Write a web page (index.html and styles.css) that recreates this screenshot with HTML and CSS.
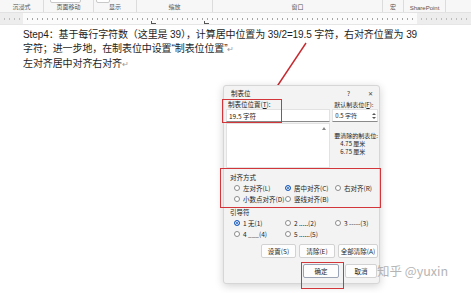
FILE: index.html
```html
<!DOCTYPE html>
<html>
<head>
	<meta charset="utf-8">
	<title>制表位</title>
	<link rel="stylesheet" href="styles.css">
</head>
<body>
	<div class="ribbon">
		<div class="group g1"><span>沉浸式</span></div>
		<div class="group g2"><div class="btn-edge"></div><span>页面移动</span></div>
		<div class="group g3"><div class="btn-edge"></div><span>显示</span></div>
		<div class="group g4"><span>缩放</span></div>
		<div class="group g5"><span>窗口</span></div>
		<div class="group g6"><span>宏</span></div>
		<div class="group g7"><span>SharePoint</span></div>
		<div class="group g8"></div>
	</div>
	<div class="ruler">
		<div class="ruler-margin left"></div>
		<div class="ruler-scale">
			<span class="tab-mark t1"></span>
			<span class="tab-mark t2"></span>
		</div>
		<div class="ruler-margin right"></div>
	</div>
	<div class="page">
		<div class="line">Step4：基于每行字符数（这里是 39），计算居中位置为 39/2=19.5 字符，右对齐位置为 39</div>
		<div class="line">字符；进一步地，在制表位中设置“制表位位置”<span class="para">↵</span></div>
		<div class="line">左对齐居中对齐右对齐<span class="para">↵</span></div>
	</div>

	<svg class="arrow" width="471" height="293" viewBox="0 0 471 293">
		<line x1="306" y1="43" x2="274" y2="91" stroke="#c8272d" stroke-width="1.4"/>
		<polygon points="271,97 270.5,88 277.5,92.5" fill="#c8272d"/>
	</svg>

	<div class="dialog">
		<div class="title-bar">
			<span class="title">制表位</span>
			<span class="help">?</span>
			<span class="close">✕</span>
		</div>
		<div class="top-cols">
			<div class="col-left">
				<div class="label">制表位位置(<u>T</u>):</div>
				<div class="input">19.5 字符</div>
				<div class="list">
					<svg class="scroll-up" width="4" height="3" viewBox="0 0 4 3"><polygon points="0,3 2,0 4,3" fill="#888"/></svg>
				</div>
			</div>
			<div class="col-right">
				<div class="label">默认制表位(<u>F</u>):</div>
				<div class="input small">
					<span>0.5 字符</span>
					<svg class="spin" width="4" height="8" viewBox="0 0 4 8"><polygon points="0,3 2,1 4,3" fill="#555"/><polygon points="0,5 2,7 4,5" fill="#555"/></svg>
				</div>
				<div class="label clear-title">要清除的制表位:</div>
				<div class="clear-item">4.75 厘米</div>
				<div class="clear-item">6.75 厘米</div>
			</div>
		</div>
		<div class="section-title first">对齐方式</div>
		<div class="radios">
			<div class="radio"><i></i>左对齐(L)</div>
			<div class="radio on"><i></i>居中对齐(C)</div>
			<div class="radio"><i></i>右对齐(R)</div>
			<div class="radio"><i></i>小数点对齐(D)</div>
			<div class="radio"><i></i>竖线对齐(B)</div>
		</div>
		<div class="section-title">引导符</div>
		<div class="radios">
			<div class="radio on"><i></i>1 无(1)</div>
			<div class="radio"><i></i>2 .....(2)</div>
			<div class="radio"><i></i>3 -----(3)</div>
			<div class="radio"><i></i>4 ___(4)</div>
			<div class="radio"><i></i>5 ......(5)</div>
		</div>
		<div class="btn-row">
			<button class="b1">设置(S)</button>
			<button class="b2">清除(E)</button>
			<button class="b3">全部清除(A)</button>
		</div>
		<div class="btn-row last">
			<button class="ok">确定</button>
			<button class="cancel">取消</button>
		</div>
	</div>

	<div class="mark mark-pos"></div>
	<div class="mark mark-align"></div>
	<div class="mark mark-ok"></div>

	<div class="watermark">知乎 @yuxin</div>
</body>
</html>
```

FILE: styles.css
```css
* {
	margin: 0;
	padding: 0;
	box-sizing: border-box;
}

body {
	width: 471px;
	height: 293px;
	overflow: hidden;
	background: #fff;
	font-family: "Liberation Sans", "Noto Sans CJK SC", sans-serif;
	color: #222;
	position: relative;
}

/* ribbon */
.ribbon {
	display: flex;
	height: 13px;
	background: #f7f7f7;
	border-bottom: 1px solid #e2e2e2;
}

.group {
	position: relative;
	border-right: 1px solid #dcdcdc;
	display: flex;
	justify-content: center;
	align-items: flex-end;
	font-size: 6px;
	color: #555;
	padding-bottom: 1px;
}

.g1 { width: 44px; }
.g2 { width: 50px; }
.g3 { width: 43px; }
.g4 { width: 76px; }
.g5 { width: 170px; }
.g6 { width: 21px; }
.g7 { width: 42px; }
.g8 { flex: 1; border-right: none; }

.btn-edge {
	position: absolute;
	top: -4px;
	left: 6px;
	right: 12px;
	height: 7px;
	border: 1px solid #c9c9c9;
	border-radius: 2px;
	background: #fff;
}

.g3 .btn-edge {
	left: 2px;
	right: 26px;
}

/* ruler */
.ruler {
	display: flex;
	height: 12px;
	background: #ededed;
	border-bottom: 1px solid #e6e6e6;
}

.ruler-margin.left {
	width: 23px;
	background: repeating-linear-gradient(90deg, transparent 0 4px, #bdbdbd 4px 5px) 0 5px / 100% 2px no-repeat;
}

.ruler-margin.right {
	flex: 1;
	background: repeating-linear-gradient(90deg, transparent 0 4px, #bdbdbd 4px 5px) 0 5px / 100% 2px no-repeat;
}

.ruler-scale {
	position: relative;
	width: 394px;
	background:
		repeating-linear-gradient(90deg, transparent 0 4px, #a5a5a5 4px 5px) 0 5px / 100% 2px no-repeat,
		#fbfbfb;
}

.tab-mark {
	position: absolute;
	bottom: 0;
	width: 5px;
	height: 3px;
	border-left: 1px solid #555;
	border-bottom: 1px solid #555;
}

.t1 { left: 128px; }
.t2 { left: 181px; }

/* page text */
.page {
	padding: 3px 0 0 23px;
	font-size: 10px;
	letter-spacing: -0.1px;
	line-height: 14px;
	color: #1e1e1e;
}

.line {
	white-space: nowrap;
}

.para {
	color: #9a9a9a;
	font-size: 8px;
}

/* arrow */
.arrow {
	position: absolute;
	left: 0;
	top: 0;
}

/* dialog */
.dialog {
	position: absolute;
	left: 223px;
	top: 85px;
	width: 157px;
	height: 199px;
	background: #f3f3f3;
	border: 1px solid #d6d6d6;
	border-radius: 3px;
	box-shadow: 0 2px 8px rgba(0, 0, 0, 0.18);
	font-family: "Noto Sans CJK SC", "Liberation Sans", sans-serif;
	font-size: 6.5px;
	color: #222;
	padding: 0 1px 0 2px;
}

.title-bar {
	display: flex;
	align-items: center;
	height: 14px;
	padding-left: 5px;
}

.title {
	flex: 1;
}

.help {
	width: 21px;
	color: #444;
}

.close {
	width: 10px;
	font-size: 6px;
	color: #444;
}

.top-cols {
	display: flex;
	gap: 2px;
}

.col-left {
	width: 107px;
}

.col-right {
	flex: 1;
	font-size: 6px;
}

.label {
	height: 9px;
	line-height: 9px;
	padding-left: 2px;
	white-space: nowrap;
}

.input {
	height: 13px;
	line-height: 12px;
	background: #fff;
	border: 1px solid #e2e2e2;
	border-bottom-color: #8a8a8a;
	padding-left: 2px;
	font-size: 6.5px;
	white-space: nowrap;
}

.input.small {
	display: flex;
	justify-content: space-between;
	align-items: center;
	font-size: 6px;
	padding-right: 1px;
}

.list {
	position: relative;
	height: 45px;
	margin-top: 1px;
	background: #fff;
	border: 1px solid #e2e2e2;
}

.scroll-up {
	position: absolute;
	right: 3px;
	top: 3px;
}

.clear-title {
	margin-top: 9px;
}

.clear-item {
	height: 8px;
	line-height: 8px;
	padding-left: 8px;
	white-space: nowrap;
}

.section-title {
	height: 10px;
	line-height: 10px;
	padding-left: 4px;
	margin-top: 3px;
}

.section-title.first {
	margin-top: 4px;
}

.radios {
	display: grid;
	grid-template-columns: 51px 50px 45px;
	grid-auto-rows: 11px;
	padding-left: 8px;
}

.radio {
	display: flex;
	align-items: center;
	gap: 3px;
	white-space: nowrap;
}

.radio i {
	width: 6px;
	height: 6px;
	border-radius: 50%;
	border: 1px solid #8c8c8c;
	background: #fff;
}

.radio.on i {
	border: 1.5px solid #1f5fbf;
	background: #1f5fbf;
	box-shadow: inset 0 0 0 1px #fff;
}

.btn-row {
	display: flex;
	justify-content: flex-end;
	gap: 3px;
	margin-top: 5px;
}

.btn-row.last {
	gap: 6px;
	margin-top: 6px;
	padding-right: 1px;
}

button {
	height: 14px;
	font-family: "Noto Sans CJK SC", "Liberation Sans", sans-serif;
	font-size: 6.5px;
	color: #222;
	background: #fdfdfd;
	border: 1px solid #d2d2d2;
	border-radius: 2px;
	white-space: nowrap;
}

.b1 { width: 35px; }
.b2 { width: 36px; }
.b3 { width: 40px; }
.ok {
	width: 36px;
	border-color: #9aa4b5;
}
.cancel { width: 32px; }

/* red highlight boxes */
.mark {
	position: absolute;
	border: 1.5px solid #d2363a;
}

.mark-pos {
	left: 222px;
	top: 99px;
	width: 60px;
	height: 24px;
}

.mark-align {
	left: 220px;
	top: 168px;
	width: 161px;
	height: 40px;
}

.mark-ok {
	left: 301px;
	top: 262px;
	width: 43px;
	height: 27px;
}

.watermark {
	position: absolute;
	left: 377px;
	top: 261px;
	font-family: "Noto Sans CJK SC", sans-serif;
	font-size: 12.5px;
	color: #b4b4b4;
	white-space: nowrap;
}
```
